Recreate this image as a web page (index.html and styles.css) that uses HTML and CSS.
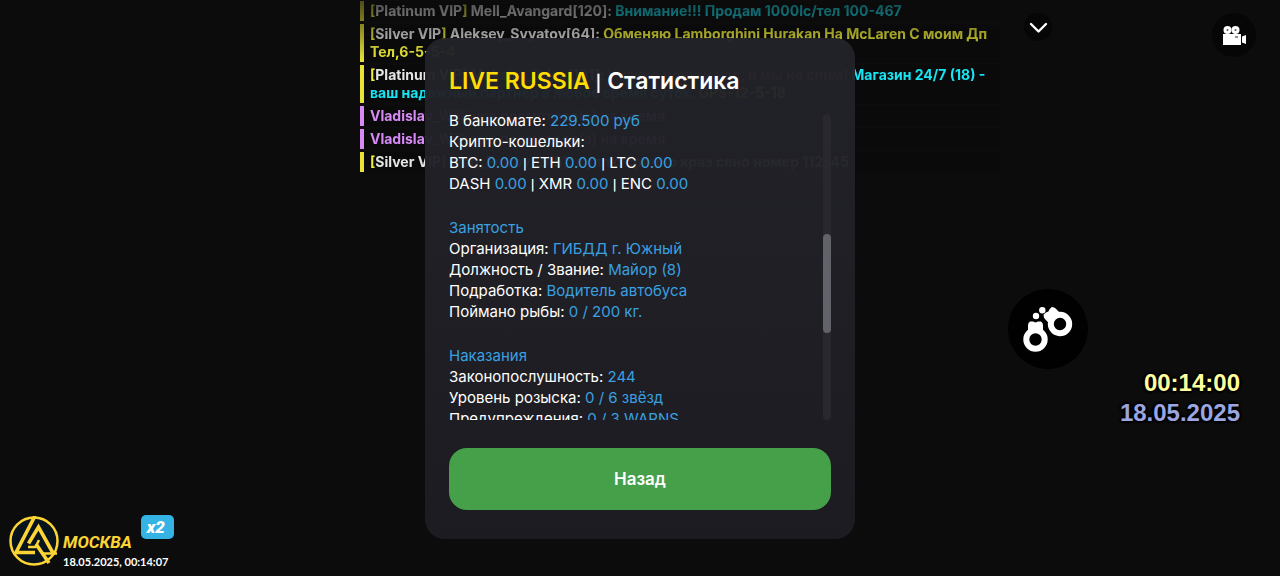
FILE: index.html
```html
<!DOCTYPE html>
<html lang="ru">
<head>
<meta charset="utf-8">
<meta name="viewport" content="width=device-width, initial-scale=1">
<title>LIVE RUSSIA | Статистика</title>
<link rel="stylesheet" href="styles.css">
</head>
<body>
<main class="stage">
  <section class="layer chat-layer" aria-label="Чат">
    <ul class="chat">
      <li class="msg"><span class="vip">[</span>Platinum VIP<span class="vip">]</span> Mell_Avangard[120]: <span class="cyan">Внимание!!! Продам 1000lc/тел 100-467</span></li>
      <li class="msg"><span class="vip">[</span>Silver VIP<span class="vip">]</span> Aleksey_Svyatov[64]: <span class="vip">Обменяю Lamborghini Hurakan На McLaren С моим Дп Тел,6-5-5-4</span></li>
      <li class="msg"><span class="vip">[</span>Platinum VIP<span class="vip">]</span> Maksim_Orlov[131]: <span class="rose">Низкие цены у нас, и мы не спим!</span> <span class="cyan">Магазин 24/7 (18) -<br>ваш надежный партнер в любое время суток.</span> <span class="vip">GPS-12-5-18</span></li>
      <li class="msg violet">Vladislav_Williams посмотрел(а) на время</li>
      <li class="msg violet">Vladislav_Williams посмотрел(а) на время</li>
      <li class="msg"><span class="vip">[</span>Silver VIP<span class="vip">]</span> Ivan_Petrov[245]: куплю срочно краз сено номер 112745</li>
    </ul>
  </section>

  <section class="layer hud">
    <header class="hud-top">
      <button class="round small" aria-label="Свернуть чат"><svg viewBox="0 0 28 28"><path d="M7 11l7.500 7.500 7.500-7.500" fill="none" stroke="#fff" stroke-width="2.400" stroke-linecap="round" stroke-linejoin="round"/></svg></button>
      <button class="round medium" aria-label="Камера"><svg viewBox="0 0 44 44"><g fill="#fff"><circle cx="15.500" cy="17" r="4"/><circle cx="23.500" cy="17" r="4"/><path d="M11 21h18v11H11zM30 23.500l4-1.500v9l-4-1.500z"/></g><circle cx="15.500" cy="17" r="1" fill="#555"/><circle cx="23.500" cy="17" r="1" fill="#555"/><path d="M23 24h3" stroke="#222"/></svg></button>
    </header>
    <div class="hud-side">
      <button class="round large" aria-label="Наручники"><svg viewBox="0 0 80 80">
        <circle cx="28" cy="27" r="3.200" fill="#fff"/><circle cx="34.300" cy="21.300" r="3.200" fill="#fff"/>
        <g transform="translate(27.500 50.500)"><path d="M-7.500-7v-7q0-2 1-3l1-1h3l2.500 1 2.500-1h3l1 1q1 1 1 3v7z" fill="#fff"/><circle r="9.200" fill="#010101" stroke="#fff" stroke-width="6"/></g>
        <g transform="translate(52 35) rotate(-43)"><path d="M-7.500-7v-7q0-2 1-3l1-1h3l2.500 1 2.500-1h3l1 1q1 1 1 3v7z" fill="#fff"/><circle r="9.200" fill="#010101" stroke="#fff" stroke-width="6"/></g>
      </svg></button>
      <div class="clock"><time class="clock-time">00:14:00</time><time class="clock-date">18.05.2025</time></div>
    </div>
    <footer class="brand">
      <svg class="logo" viewBox="0 0 50 50"><circle cx="25" cy="25" r="23.500" fill="#07131d" stroke="#fcd535" stroke-width="2.500"/>
        <g fill="none" stroke="#fcd535" stroke-width="3.600"><path d="M26 0L7 36.500h19"/><path d="M19.500 27.500L29.500 11 44 37"/><path d="M19 31h7.500l3.500-7" stroke-width="2.500"/><path d="M27 28l13 19"/><path d="M34 37.500h14" stroke-width="2.500"/></g>
      </svg>
      <div class="brand-text">
        <div class="city-row"><strong class="city">МОСКВА</strong><span class="boost">x2</span></div>
        <time class="stamp">18.05.2025, 00:14:07</time>
      </div>
    </footer>
  </section>

  <section class="layer dialog-layer">
    <div class="dialog" role="dialog" aria-labelledby="title">
      <h1 class="title" id="title"><span class="gold">LIVE RUSSIA</span> <span class="bar">|</span> Статистика</h1>
      <div class="scroller">
        <div class="stats">
          <div class="group">
            <p>В банкомате: <b>229.500 руб</b></p>
            <p>Крипто-кошельки:</p>
            <p>BTC: <b>0.00</b> <span class="bar">|</span> ETH <b>0.00</b> <span class="bar">|</span> LTC <b>0.00</b></p>
            <p>DASH <b>0.00</b> <span class="bar">|</span> XMR <b>0.00</b> <span class="bar">|</span> ENC <b>0.00</b></p>
          </div>
          <div class="group">
            <h2>Занятость</h2>
            <p>Организация: <b>ГИБДД г. Южный</b></p>
            <p>Должность / Звание: <b>Майор (8)</b></p>
            <p>Подработка: <b>Водитель автобуса</b></p>
            <p>Поймано рыбы: <b>0 / 200 кг.</b></p>
          </div>
          <div class="group">
            <h2>Наказания</h2>
            <p>Законопослушность: <b>244</b></p>
            <p>Уровень розыска: <b>0 / 6 звёзд</b></p>
            <p>Предупреждения: <b>0 / 3 WARNS</b></p>
          </div>
        </div>
        <div class="track"><div class="thumb"></div></div>
      </div>
      <button class="back">Назад</button>
    </div>
  </section>
</main>
</body>
</html>
```
FILE: styles.css
```css
* { box-sizing: border-box; }
body { margin: 0; background: #0c0c0c; color: #fff; font-family: Inter, "Liberation Sans", sans-serif; }
h1, h2, p, ul { margin: 0; padding: 0; }
button { border: 0; padding: 0; color: inherit; font: inherit; cursor: pointer; }
.stage { display: grid; min-height: 100vh; overflow: hidden; }
.layer { grid-area: 1 / 1; }
.chat-layer { padding: 1px 280px 0 360px; }
.chat { display: flex; flex-direction: column; gap: 3px; list-style: none; font-size: 14px; font-weight: 700; line-height: 18px; mask-image: linear-gradient(rgba(0,0,0,.3), rgba(0,0,0,.65) 32px, #000 60px); }
.msg { padding: 1px 0 1px 6px; border-left: 4px solid #e8e337; background: #0a0a0a; color: #e6e6e6; }
.vip { color: #f0ee38; }
.cyan { color: #18e4f4; }
.rose { color: #e052a0; }
.violet { color: #d78af5; border-color: #d78af5; }
.hud { display: flex; flex-direction: column; justify-content: space-between; }
.hud-top { display: flex; justify-content: flex-end; gap: 160px; padding: 13px 24px 0 0; }
.round { display: block; border-radius: 50%; background: #060606; }
.round svg { display: block; width: 100%; }
.small { width: 28px; height: 28px; }
.medium { width: 44px; height: 44px; }
.large { width: 80px; height: 80px; background: #010101; }
.hud-side { display: flex; flex-direction: column; align-items: flex-end; padding: 144px 40px 0 0; }
.hud-side .large { margin-right: 152px; }
.clock { display: flex; flex-direction: column; gap: 2px; align-items: flex-end; font: bold 24px/28px "Liberation Sans", sans-serif; text-shadow: 2px 0 2px #000, -2px 0 2px #000, 0 2px 2px #000, 0 -2px 2px #000; }
.clock-time { color: #ffff9c; }
.clock-date { color: #9aa5e2; }
.brand { display: flex; align-items: flex-end; gap: 4px; padding: 0 0 5px 9px; }
.logo { width: 50px; height: 50px; margin-bottom: 5px; }
.city-row { display: flex; gap: 9px; }
.city { padding-top: 16px; color: #fcd535; font: italic bold 17px/22px Roboto, sans-serif; }
.boost { align-self: flex-start; padding: 0 9px 0 6px; border-radius: 5px; background: #34b3e4; font: italic 900 17px/24px Roboto, sans-serif; }
.stamp { display: block; font: bold 11px/18px Lato, sans-serif; }
.dialog-layer { z-index: 1; display: flex; align-items: center; justify-content: center; }
.dialog { width: 430px; padding: 27px 24px 29px; border-radius: 20px; background: linear-gradient(#222329f7, #1d1c22f7); }
.title { font-size: 23px; line-height: 32px; font-weight: 600; }
.gold { color: #ffdc04; }
.bar { font-size: 70%; font-weight: 600; line-height: 1; }
.scroller { display: flex; justify-content: space-between; height: 306px; margin: 17px 0 28px; overflow: hidden; }
.stats { display: flex; flex-direction: column; gap: 23px; margin-top: -4px; font-size: 15px; line-height: 21px; }
.stats b, .stats h2 { color: #3aa0e0; font-size: 15px; font-weight: 400; }
.track { width: 8px; padding-top: 120px; border-radius: 4px; background: #29282e; }
.thumb { height: 99px; border-radius: 4px; background: #62626b; }
.back { display: block; width: 100%; height: 62px; border-radius: 18px; background: #45a049; font-size: 17px; font-weight: 600; }
```
